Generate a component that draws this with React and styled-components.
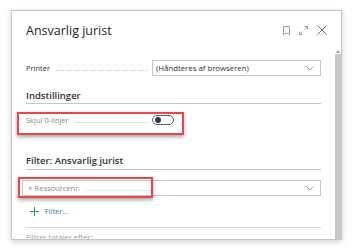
import styled, { createGlobalStyle } from "styled-components";

const GlobalStyle = createGlobalStyle`
  html, body {
    margin: 0;
    padding: 0;
    background: #ffffff;
  }
  body {
    font-family: "Open Sans", "Noto Sans", sans-serif;
    color: #323130;
  }
`;

const Page = styled.div`
  width: 353px;
  height: 250px;
  padding: 10px 0 0 11px;
  box-sizing: border-box;
  overflow: hidden;
`;

const Dialog = styled.div`
  width: 331px;
  height: 230px;
  box-sizing: border-box;
  background: #fff;
  border: 1px solid #c6c6c6;
  box-shadow: 0 2px 6px rgba(0, 0, 0, 0.18);
  display: flex;
  flex-direction: column;
  overflow: hidden;
`;

const Header = styled.div`
  display: flex;
  align-items: center;
  height: 38px;
  padding: 0 14px 0 14px;
  flex-shrink: 0;
`;

const Title = styled.div`
  flex: 1;
  font-size: 12.5px;
  font-weight: 500;
  color: #201f1e;
`;

const HeaderIcons = styled.div`
  display: flex;
  align-items: center;
  gap: 9px;
`;

const Body = styled.div`
  flex: 1;
  display: flex;
  min-height: 0;
`;

const Content = styled.div`
  flex: 1;
  padding: 11px 14px 0 14px;
  display: flex;
  flex-direction: column;
  min-width: 0;
`;

const Scrollbar = styled.div`
  width: 6px;
  display: flex;
  flex-direction: column;
`;

const ScrollArrow = styled.div`
  height: 5px;
  display: flex;
  justify-content: center;
  align-items: center;
`;

const ScrollThumb = styled.div`
  flex: 1;
  background: #c8c8c8;
`;

const FieldRow = styled.div`
  position: relative;
  display: flex;
  align-items: center;
  height: 16px;
  margin-top: ${(p) => p.top || 0}px;
`;

const Label = styled.div`
  display: flex;
  align-items: flex-end;
  width: 126px;
  font-size: 7.5px;
  line-height: 10px;
  color: ${(p) => (p.muted ? "#8a8886" : "#323130")};
  white-space: nowrap;
  &::after {
    content: "";
    flex: 1;
    margin: 0 4px 2px 6px;
    border-bottom: 1px dotted #c8c6c4;
  }
`;

const Select = styled.div`
  flex: 1;
  height: 16px;
  box-sizing: border-box;
  border: 1px solid #c8c6c4;
  display: flex;
  align-items: center;
  padding: 0 6px 0 3px;
  font-size: 7.8px;
  color: #323130;
`;

const SelectText = styled.span`
  flex: 1;
`;

const Section = styled.div`
  margin-top: ${(p) => p.top}px;
  padding-bottom: ${(p) => p.pad || 1}px;
  border-bottom: 1px solid #c8c6c4;
  font-size: 9.5px;
  font-weight: 600;
  color: #323130;
  line-height: 12px;
`;

const Toggle = styled.div`
  width: 22px;
  height: 10px;
  box-sizing: border-box;
  border: 1px solid #605e5c;
  border-radius: 6px;
  display: flex;
  align-items: center;
  padding-left: 2px;
  &::before {
    content: "";
    width: 6px;
    height: 6px;
    border-radius: 50%;
    background: #2f3b52;
  }
`;

const FilterField = styled.div`
  flex: 1;
  height: 16px;
  box-sizing: border-box;
  border: 1px solid #c8c6c4;
  margin-left: -4px;
  display: flex;
  align-items: center;
  padding: 0 6px 0 5px;
`;

const FilterLabel = styled.div`
  display: flex;
  align-items: flex-end;
  width: 118px;
  font-size: 7.5px;
  line-height: 10px;
  color: #8a8886;
  white-space: nowrap;
  &::after {
    content: "";
    flex: 1;
    margin: 0 0 2px 6px;
    border-bottom: 1px dotted #d2d0ce;
  }
`;

const Remove = styled.span`
  margin-right: 2px;
  font-size: 8px;
  line-height: 10px;
  color: #8a8886;
`;

const Spacer = styled.span`
  flex: 1;
`;

const Highlight = styled.div`
  position: absolute;
  left: ${(p) => p.left}px;
  top: ${(p) => p.top}px;
  width: ${(p) => p.width}px;
  height: ${(p) => p.height}px;
  box-sizing: border-box;
  border: 2px solid #e9454b;
  box-shadow: 0 2px 4px rgba(0, 0, 0, 0.35);
  pointer-events: none;
`;

const AddFilter = styled.div`
  display: flex;
  align-items: center;
  gap: 6px;
  margin-top: 10px;
  padding-left: 4px;
  font-size: 7.5px;
  color: #2b8f8c;
  height: 12px;
`;

const Divider = styled.div`
  margin-top: 11px;
  border-top: 1px solid #dcdcdc;
`;

const CutText = styled.div`
  margin-top: 4px;
  font-size: 7.5px;
  color: #a19f9d;
  white-space: nowrap;
`;

const Chevron = () => (
  <svg width="8" height="5" viewBox="0 0 8 5" fill="none">
    <path d="M0.5 0.5 L4 4 L7.5 0.5" stroke="#8a8886" strokeWidth="0.8" />
  </svg>
);

export default function App() {
  return (
    <>
      <GlobalStyle />
      <Page>
        <Dialog>
          <Header>
            <Title>Ansvarlig jurist</Title>
            <HeaderIcons>
              <svg width="7" height="9" viewBox="0 0 7 9" fill="none">
                <path d="M0.5 0.5 H6.5 V8.5 L3.5 7 L0.5 8.5 Z" stroke="#8a8886" strokeWidth="0.8" />
              </svg>
              <svg width="9" height="9" viewBox="0 0 9 9" fill="none">
                <path d="M5.5 0.5 H8.5 V3.5 M8.5 0.5 L5.5 3.5 M3.5 5.5 L0.5 8.5 M0.5 5.5 V8.5 H3.5" stroke="#8a8886" strokeWidth="0.8" />
              </svg>
              <svg width="10" height="10" viewBox="0 0 10 10" fill="none">
                <path d="M0.5 0.5 L9.5 9.5 M9.5 0.5 L0.5 9.5" stroke="#605e5c" strokeWidth="0.9" />
              </svg>
            </HeaderIcons>
          </Header>
          <Body>
            <Content>
              <FieldRow>
                <Label>Printer</Label>
                <Select>
                  <SelectText>(Håndteres af browseren)</SelectText>
                  <Chevron />
                </Select>
              </FieldRow>
              <Section top={14}>Indstillinger</Section>
              <FieldRow top={11}>
                <Label muted>Skjul 0-linjer</Label>
                <Toggle />
                <Highlight left={-9} top={-3} width={167} height={23} />
              </FieldRow>
              <Section top={30} pad={2}>Filter: Ansvarlig jurist</Section>
              <FieldRow top={10}>
                <FilterField>
                  <Remove>×</Remove>
                  <FilterLabel>Ressourcenr.</FilterLabel>
                  <Spacer />
                  <Chevron />
                </FilterField>
                <Highlight left={-8} top={-3} width={135} height={21} />
              </FieldRow>
              <AddFilter>
                <svg width="9" height="9" viewBox="0 0 9 9" fill="none">
                  <path d="M4.5 0 V9 M0 4.5 H9" stroke="#2b8f8c" strokeWidth="1" />
                </svg>
                Filter...
              </AddFilter>
              <Divider />
              <CutText>Filtrer totaler efter:</CutText>
            </Content>
            <Scrollbar>
              <ScrollArrow>
                <svg width="4" height="3" viewBox="0 0 4 3">
                  <path d="M0 3 L2 0 L4 3 Z" fill="#9a9a9a" />
                </svg>
              </ScrollArrow>
              <ScrollThumb />
            </Scrollbar>
          </Body>
        </Dialog>
      </Page>
    </>
  );
}
